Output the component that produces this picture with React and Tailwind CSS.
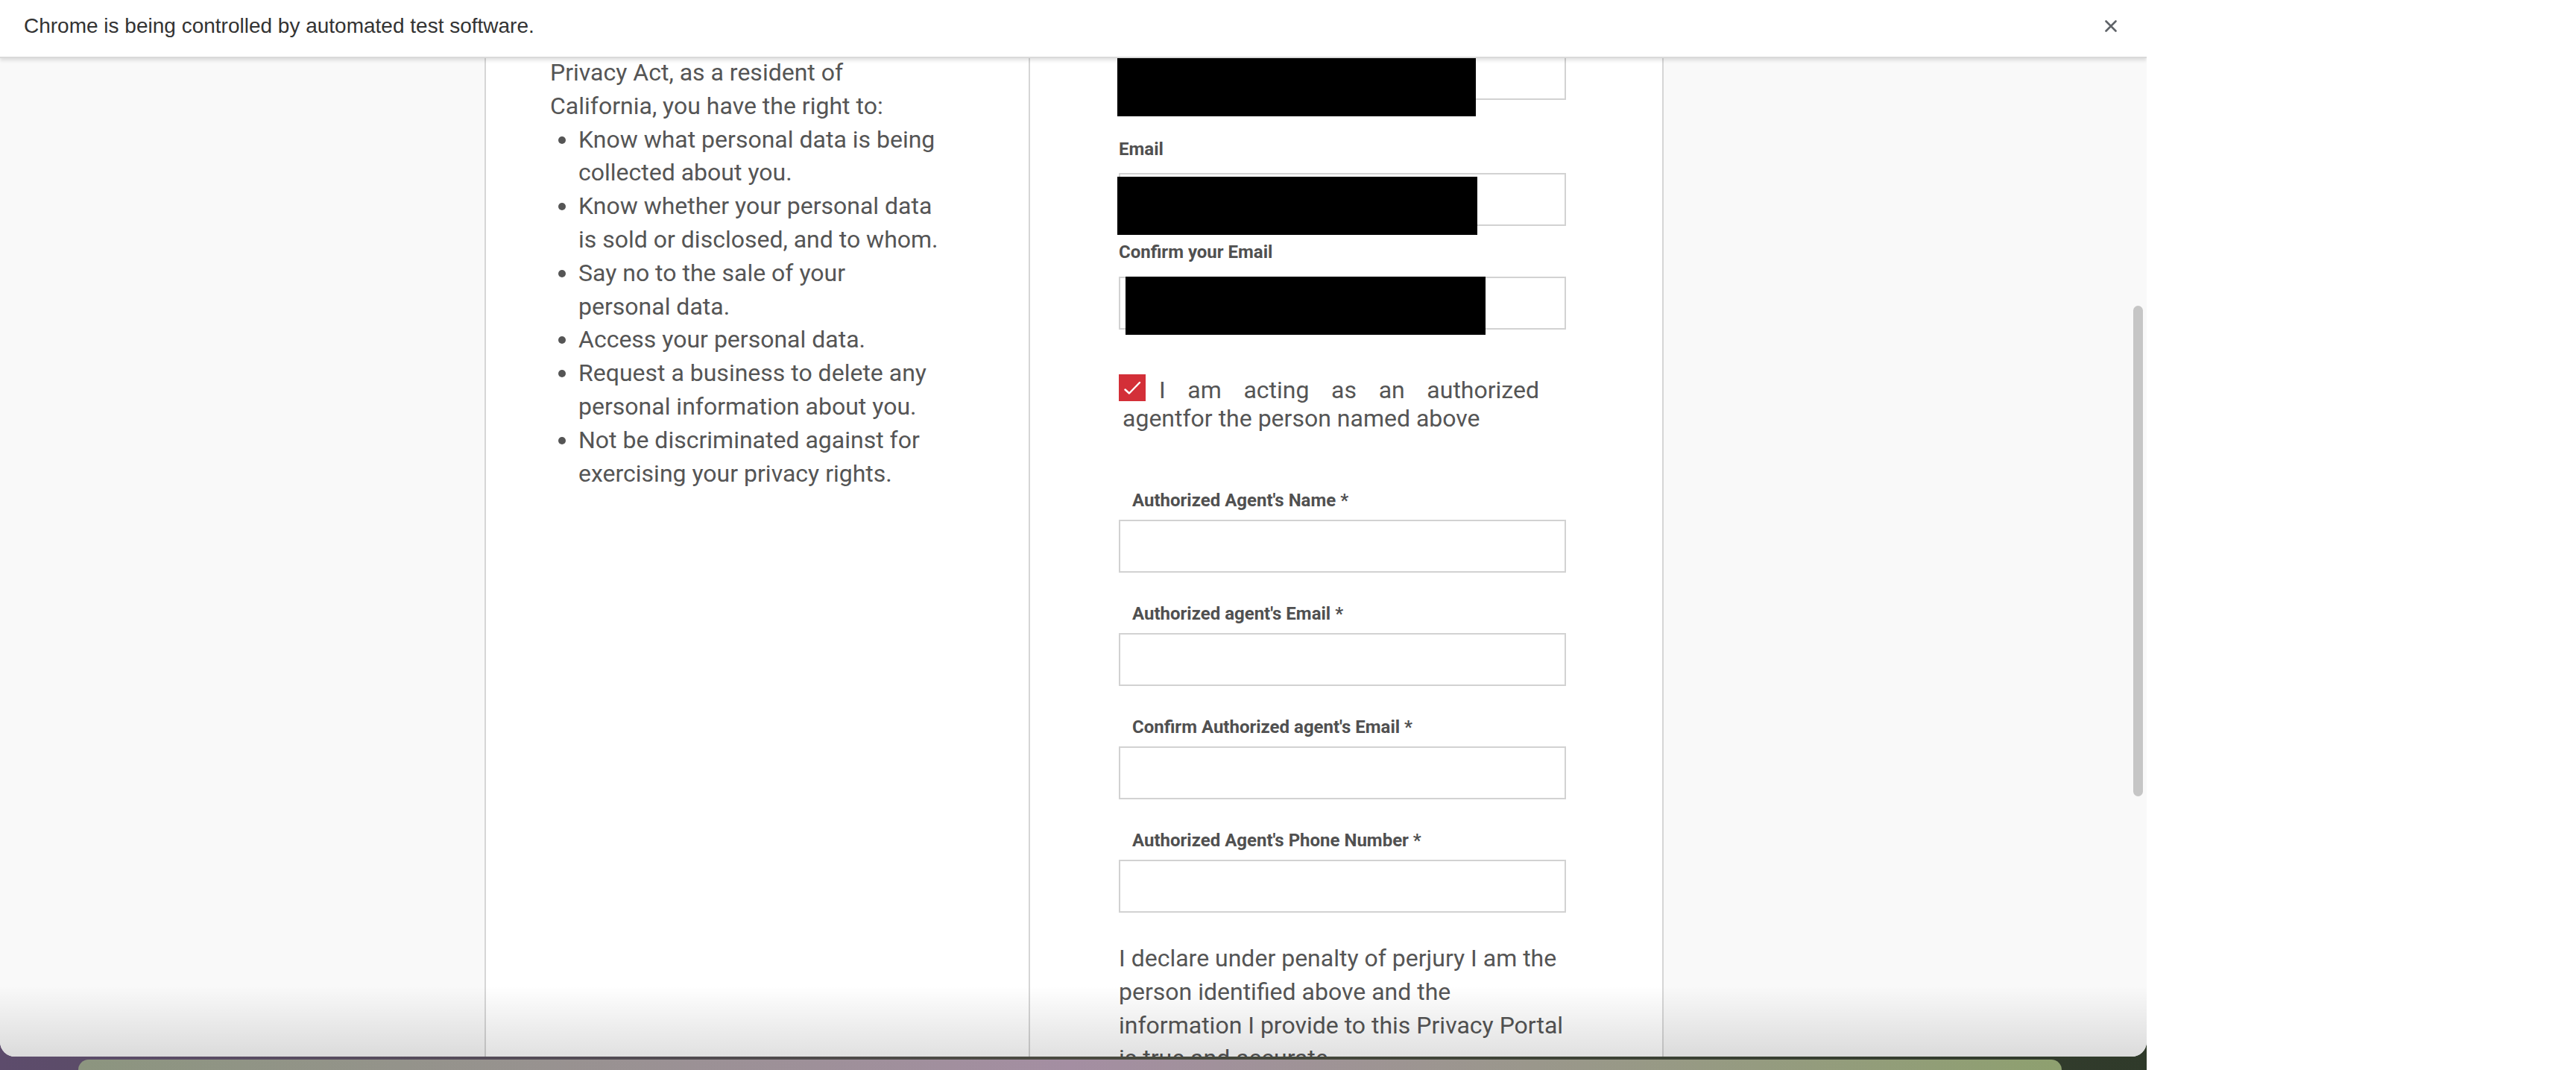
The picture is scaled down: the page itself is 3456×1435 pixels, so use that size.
import React from 'react'

const body = { fontFamily: 'Roboto, "Liberation Sans", sans-serif' }

function Field({ label, first }) {
  return (
    <>
      <label className={`block ml-[18px] text-[24px] leading-[28px] font-bold text-[#505050] ${first ? 'mt-[77px]' : 'mt-[41px]'}`}>
        {label}
      </label>
      <div className="relative mt-[12px] w-[600px] h-[71px] border-2 border-[#d2d2d2] bg-white" />
    </>
  )
}

export default function App() {
  return (
    <div className="flex w-[3456px] h-[1435px] overflow-hidden bg-white" style={body}>

      {/* ── browser window + wallpaper strip ───────────────────── */}
      <div className="flex flex-col w-[2880px] h-full bg-linear-to-r from-[#5d4c6c] via-[#4a4a40] to-[#2f3a2a]">
        <div className="flex flex-col h-[1417px] rounded-b-[20px] overflow-hidden bg-[#f9f9f9]">

          {/* Automation info bar */}
          <div className="relative z-10 flex-shrink-0 flex items-center justify-between h-[78px] pl-[32px] pr-[40px] pb-[6px]
                          bg-white border-b-2 border-[#d9d9d9] shadow-[0_3px_5px_rgba(0,0,0,0.12)]">
            <span className="text-[28px] text-[#333]" style={{ fontFamily: '"Liberation Sans", Arial, sans-serif' }}>
              Chrome is being controlled by automated test software.
            </span>
            <svg width="16" height="16" viewBox="0 0 16 16" className="flex-shrink-0">
              <path d="M1.5 1.5 L14.5 14.5 M14.5 1.5 L1.5 14.5" stroke="#5f6368" strokeWidth="2.6" strokeLinecap="round" />
            </svg>
          </div>

          {/* Page */}
          <div className="relative flex-1 min-h-0 overflow-hidden bg-[#f9f9f9]">
            <div className="flex h-full ml-[650px] w-[1582px] border-x-2 border-[#d6d6d6] text-[#555]">

              {/* Left column – rights text */}
              <div className="w-[728px] h-full bg-white pl-[86px]">
                <p className="mt-[-3px] text-[32px] leading-[44.8px]">
                  Privacy Act, as a resident of<br />
                  California, you have the right to:
                </p>
                <ul className="list-disc pl-[38px] text-[32px] leading-[44.8px]">
                  <li>Know what personal data is being<br />collected about you.</li>
                  <li>Know whether your personal data<br />is sold or disclosed, and to whom.</li>
                  <li>Say no to the sale of your<br />personal data.</li>
                  <li>Access your personal data.</li>
                  <li>Request a business to delete any<br />personal information about you.</li>
                  <li>Not be discriminated against for<br />exercising your privacy rights.</li>
                </ul>
              </div>

              {/* Right column – form */}
              <div className="w-[850px] h-full bg-white border-l-2 border-[#d6d6d6] pl-[119px]">
                <div className="relative mt-[-15px] w-[600px] h-[71px] border-2 border-[#d2d2d2] bg-white">
                  <div className="absolute left-[-4px] top-[13px] w-[481px] h-[78px] bg-black" />
                </div>

                <label className="block mt-[52px] text-[24px] leading-[28px] font-bold text-[#505050]">Email</label>
                <div className="relative mt-[18px] w-[600px] h-[71px] border-2 border-[#d2d2d2] bg-white">
                  <div className="absolute left-[-4px] top-[3px] w-[483px] h-[78px] bg-black" />
                </div>

                <label className="block mt-[21px] text-[24px] leading-[28px] font-bold text-[#505050]">Confirm your Email</label>
                <div className="relative mt-[19px] w-[600px] h-[71px] border-2 border-[#d2d2d2] bg-white">
                  <div className="absolute left-[7px] top-[-2px] w-[483px] h-[78px] bg-black" />
                </div>

                <p className="mt-[63px] ml-[5px] w-[559px] text-[32px] leading-[37.5px] text-justify">
                  <span className="relative top-[-3px] inline-block align-top -ml-[5px] mr-[18px] w-[36px] h-[36px] bg-[#d32f38]">
                    <svg width="36" height="36" viewBox="0 0 36 36">
                      <path d="M8.5 20.5 L14 25.5 L28 11" fill="none" stroke="white" strokeWidth="2.4" strokeLinecap="round" strokeLinejoin="round" />
                    </svg>
                  </span>
                  I am acting as an authorized agentfor the person named above
                </p>

                <Field first label="Authorized Agent's Name *" />
                <Field label="Authorized agent's Email *" />
                <Field label="Confirm Authorized agent's Email *" />
                <Field label="Authorized Agent's Phone Number *" />

                <p className="mt-[39px] w-[620px] text-[32px] leading-[44.8px]">
                  I declare under penalty of perjury I am the<br />
                  person identified above and the<br />
                  information I provide to this Privacy Portal<br />
                  is true and accurate.
                </p>
              </div>
            </div>

            {/* scrollbar thumb */}
            <div className="absolute left-[2862px] top-[332px] w-[13px] h-[658px] rounded-full bg-[#c6c6c6]" />

            {/* bottom window shade */}
            <div className="pointer-events-none absolute inset-x-0 bottom-0 h-[95px] bg-linear-to-b from-transparent to-black/[0.12]" />
          </div>
        </div>

        {/* desktop wallpaper + dock edge */}
        <div className="flex-1 flex flex-col">
          <div className="h-[4px]" />
          <div className="flex-1 ml-[105px] w-[2661px] rounded-t-[16px] bg-linear-to-r from-[#8c957f] via-[#a48ea2] to-[#8ea06f]" />
        </div>
      </div>

      {/* right blank area */}
      <div className="flex-1 bg-white" />
    </div>
  )
}
